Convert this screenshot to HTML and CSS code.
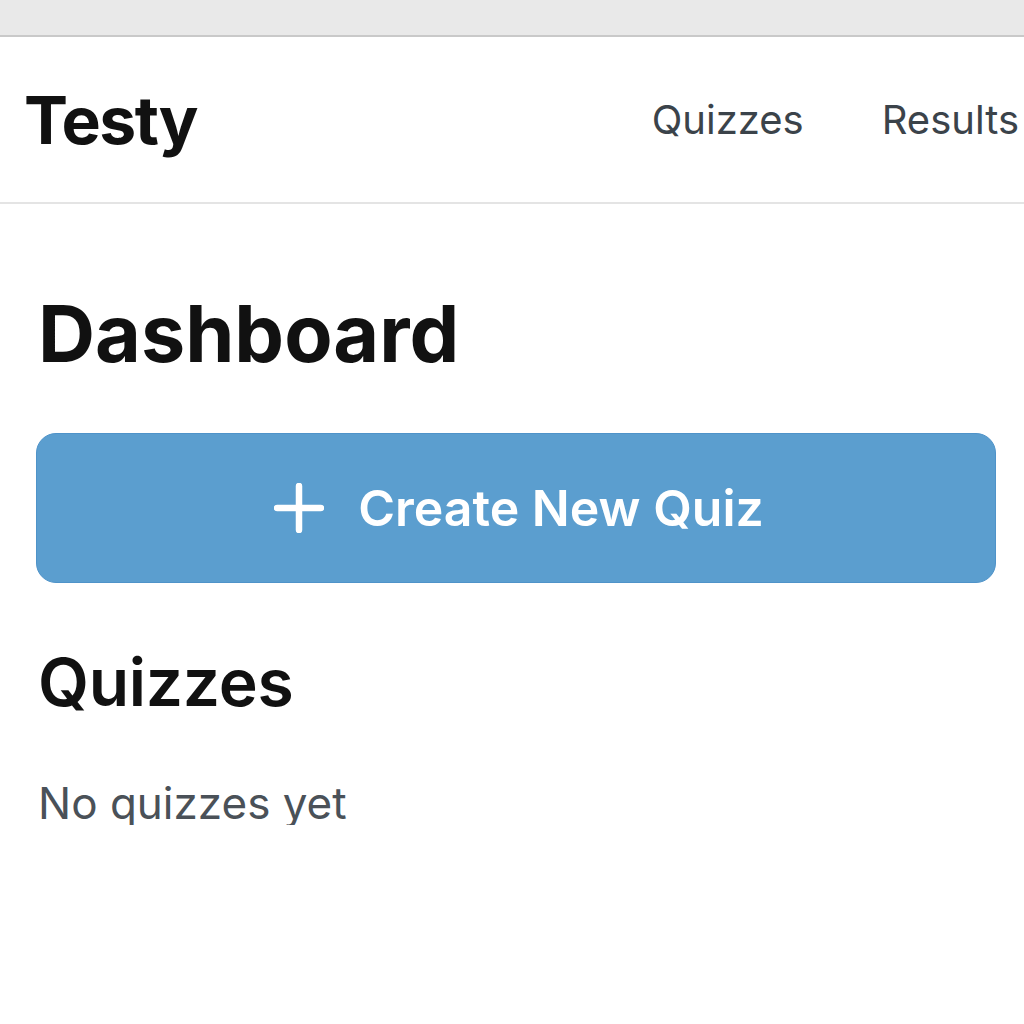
FILE: index.html
```html
<!DOCTYPE html>
<html lang="en">
<head>
<meta charset="utf-8">
<title>Testy</title>
<link rel="stylesheet" href="styles.css">
</head>
<body>
<div class="chrome"></div>
<header class="header">
  <div class="brand">Testy</div>
  <nav class="nav">
    <a class="nav-link" href="#">Quizzes</a>
    <a class="nav-link" href="#">Results</a>
  </nav>
</header>
<main class="main">
  <h1 class="title">Dashboard</h1>
  <button class="create-btn" type="button">
    <svg class="plus" width="50" height="50" viewBox="0 0 50 50" aria-hidden="true">
      <path d="M25 3 V47 M3 25 H47" stroke="#fff" stroke-width="6.5" stroke-linecap="round" fill="none"/>
    </svg>
    <span>Create New Quiz</span>
  </button>
  <h2 class="section">Quizzes</h2>
  <p class="empty">No quizzes yet</p>
</main>
</body>
</html>
```
FILE: styles.css
```css
html, body {
  margin: 0;
  padding: 0;
  background: #fff;
  font-family: Inter, "Liberation Sans", Arial, sans-serif;
}
.chrome {
  height: 35px;
  background: #e9e9e9;
  border-bottom: 2px solid #c9c9c9;
}
.header {
  height: 165px;
  border-bottom: 2px solid #e4e4e4;
  display: flex;
  align-items: center;
  justify-content: space-between;
  padding-left: 24px;
  padding-right: 5px;
  overflow: hidden;
}
.brand {
  font-size: 66px;
  font-weight: 700;
  letter-spacing: -1.5px;
  color: #111;
}
.nav {
  display: flex;
  gap: 78px;
}
.nav-link {
  font-size: 40px;
  color: #3b434a;
  text-decoration: none;
}
.main {
  padding: 0 28px 0 36px;
}
.title {
  margin: 90px 0 0 2px;
  font-size: 79px;
  font-weight: 700;
  letter-spacing: 0;
  color: #111;
  line-height: 1;
}
.create-btn {
  margin-top: 60px;
  width: 100%;
  height: 150px;
  background: #5b9ecf;
  border: 1.5px solid #4f93c9;
  border-radius: 20px;
  display: flex;
  align-items: center;
  justify-content: center;
  gap: 34px;
  color: #fff;
  font-family: inherit;
  font-size: 50px;
  font-weight: 600;
  padding: 0 0 0 6px;
}
.plus {
  display: block;
}
.section {
  margin: 66px 0 0 2px;
  font-size: 66px;
  font-weight: 600;
  color: #111;
  line-height: 1;
  letter-spacing: -0.3px;
}
.empty {
  margin: 66px 0 0 2px;
  font-size: 44px;
  color: #4a5158;
  line-height: 1;
}
```
